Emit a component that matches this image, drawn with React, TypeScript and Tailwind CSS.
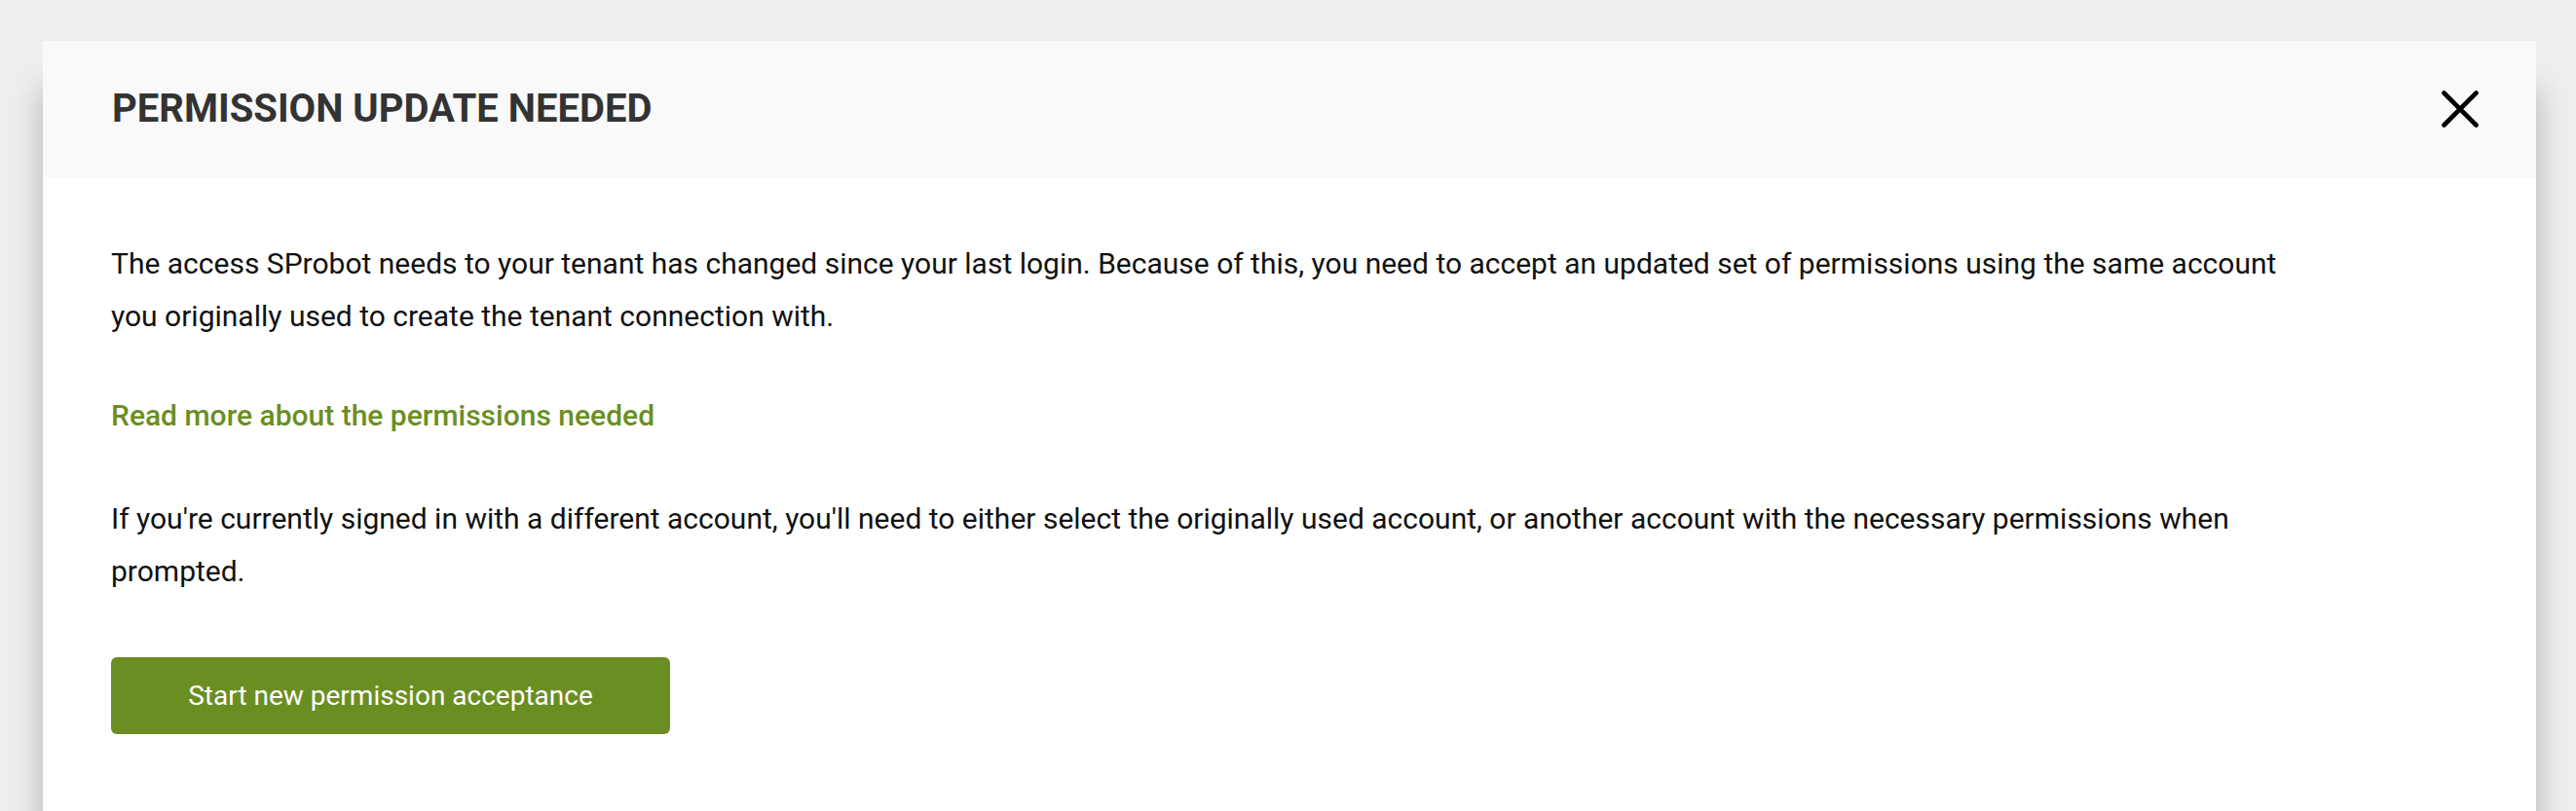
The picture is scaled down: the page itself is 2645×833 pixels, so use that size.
import React from "react";

const font = { fontFamily: "Roboto, 'Noto Sans', sans-serif" };

function CloseIcon() {
  return (
    <svg width="40" height="40" viewBox="0 0 40 40" fill="none" aria-hidden="true">
      <path d="M3.5 3.5 36.5 36.5M36.5 3.5 3.5 36.5" stroke="#000" strokeWidth="4.6" strokeLinecap="round" />
    </svg>
  );
}

export default function App() {
  return (
    <div className="min-h-screen overflow-hidden bg-[#eeeeee] pt-[42px] pl-[44px] pr-[41px]" style={font}>
      <div className="bg-white pb-[120px] shadow-[0_50px_30px_rgba(0,0,0,0.25)]">
        <div className="flex h-[140px] items-center justify-between bg-[#f9f9f9] pl-[71px] pr-[58px]">
          <h1 className="text-[40px] font-bold text-[#333333]">PERMISSION UPDATE NEEDED</h1>
          <button type="button" className="flex h-[40px] w-[40px] items-center justify-center">
            <CloseIcon />
          </button>
        </div>

        <div className="px-[70px] pt-[62px]">
          <p className="max-w-[2250px] text-[30px] leading-[54px] text-[#111111]">
            The access SProbot needs to your tenant has changed since your last login. Because of this, you need to accept an
            updated set of permissions using the same account you originally used to create the tenant connection with.
          </p>

          <a href="#" className="mt-[48px] block w-fit text-[30px] font-medium leading-[54px] text-[#6b8e23]">
            Read more about the permissions needed
          </a>

          <p className="mt-[52px] max-w-[2250px] text-[30px] leading-[54px] text-[#111111]">
            If you're currently signed in with a different account, you'll need to either select the originally used account,
            or another account with the necessary permissions when prompted.
          </p>

          <button
            type="button"
            className="mt-[61px] flex h-[79px] w-[574px] items-center justify-center rounded-[6px] bg-[#6b8e23] text-[28px] text-white"
          >
            Start new permission acceptance
          </button>
        </div>
      </div>
    </div>
  );
}
